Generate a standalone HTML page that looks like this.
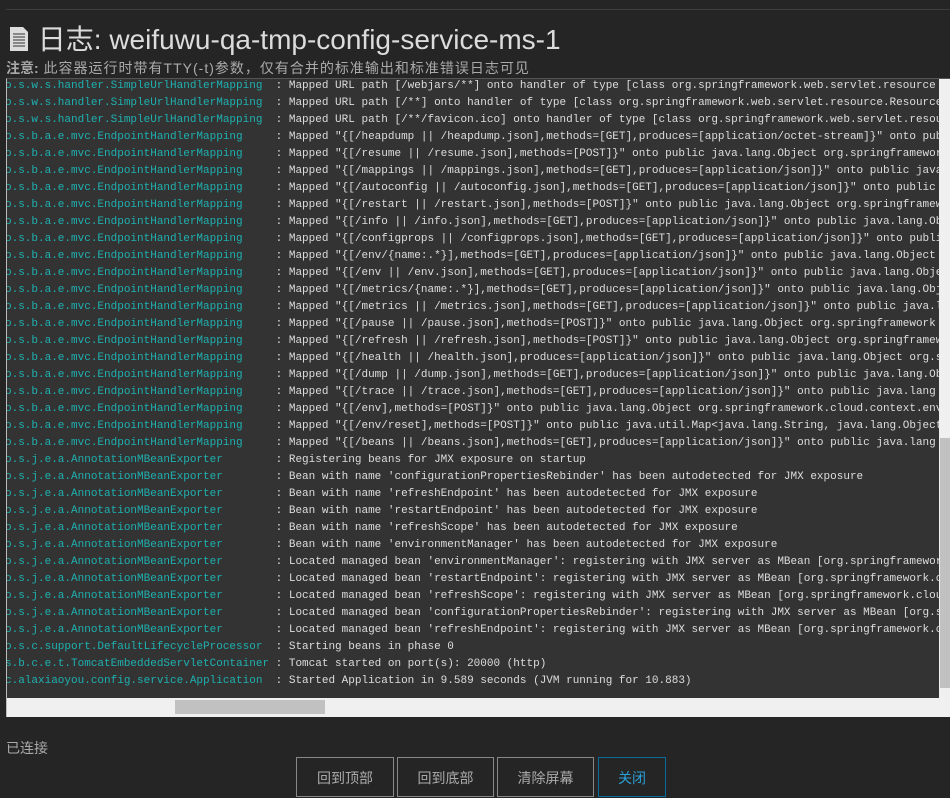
<!DOCTYPE html>
<html><head><meta charset="utf-8"><style>
body{margin:0;background:#252525;width:950px;height:794px;overflow:hidden;position:relative;font-family:"Liberation Sans","Noto Sans CJK SC",sans-serif}
.hr{position:absolute;left:6px;right:0;top:9px;height:1px;background:#3e3e3e}
h1{position:absolute;left:8px;top:22px;margin:0;font-weight:normal;font-size:28px;color:#dcdcdc;white-space:nowrap;line-height:36px}
.note{position:absolute;left:6px;top:58px;font-size:14px;letter-spacing:1px;color:#aaa;white-space:nowrap}
.note b{font-weight:bold;letter-spacing:0}
.box{position:absolute;left:6px;top:78px;width:944px;height:638px;background:#333;border-left:1px solid #bbb;border-top:1px solid #555;overflow:hidden}
pre{position:absolute;left:-2px;top:-1px;margin:0;font-family:"Liberation Mono",monospace;font-size:11px;line-height:17px;color:#ddd;white-space:pre}
pre i{font-style:normal;color:#1fb0b0}
.vs{position:absolute;right:0;top:0;width:12px;height:620px;background:#f0f0f0}
.vt{position:absolute;right:1px;top:359px;width:10px;height:250px;background:#c1c1c1}
.hs{position:absolute;left:0;bottom:0;width:944px;height:19px;background:#f0f0f0}
.ht{position:absolute;left:168px;top:2px;width:150px;height:14px;background:#c1c1c1}
.st{position:absolute;left:6px;top:738px;font-size:14px;color:#aaa}
.btn{position:absolute;top:757px;height:40px;border:1px solid #888;box-sizing:border-box;color:#aaa;font-size:14px;text-align:center;line-height:40px;background:#252525}
</style></head><body>
<div class="hr"></div>
<h1><svg width="22" height="26" viewBox="0 0 22 26" style="vertical-align:-3px"><path d="M2 1h13l5 5v19H2z" fill="#ddd"/><path d="M5 8h12M5 11h12M5 14h12M5 17h12M5 20h12" stroke="#555" stroke-width="1.3"/></svg> 日志: weifuwu-qa-tmp-config-service-ms-1</h1>
<div class="note"><b>注意:</b> 此容器运行时带有TTY(-t)参数，仅有合并的标准输出和标准错误日志可见</div>
<div class="box">
<pre><i>o.s.w.s.handler.SimpleUrlHandlerMapping </i> : Mapped URL path [/webjars/**] onto handler of type [class org.springframework.web.servlet.resource
<i>o.s.w.s.handler.SimpleUrlHandlerMapping </i> : Mapped URL path [/**] onto handler of type [class org.springframework.web.servlet.resource.ResourceHttp
<i>o.s.w.s.handler.SimpleUrlHandlerMapping </i> : Mapped URL path [/**/favicon.ico] onto handler of type [class org.springframework.web.servlet.resource
<i>o.s.b.a.e.mvc.EndpointHandlerMapping    </i> : Mapped "{[/heapdump || /heapdump.json],methods=[GET],produces=[application/octet-stream]}" onto public
<i>o.s.b.a.e.mvc.EndpointHandlerMapping    </i> : Mapped "{[/resume || /resume.json],methods=[POST]}" onto public java.lang.Object org.springframework
<i>o.s.b.a.e.mvc.EndpointHandlerMapping    </i> : Mapped "{[/mappings || /mappings.json],methods=[GET],produces=[application/json]}" onto public java
<i>o.s.b.a.e.mvc.EndpointHandlerMapping    </i> : Mapped "{[/autoconfig || /autoconfig.json],methods=[GET],produces=[application/json]}" onto public
<i>o.s.b.a.e.mvc.EndpointHandlerMapping    </i> : Mapped "{[/restart || /restart.json],methods=[POST]}" onto public java.lang.Object org.springframework
<i>o.s.b.a.e.mvc.EndpointHandlerMapping    </i> : Mapped "{[/info || /info.json],methods=[GET],produces=[application/json]}" onto public java.lang.Object
<i>o.s.b.a.e.mvc.EndpointHandlerMapping    </i> : Mapped "{[/configprops || /configprops.json],methods=[GET],produces=[application/json]}" onto public
<i>o.s.b.a.e.mvc.EndpointHandlerMapping    </i> : Mapped "{[/env/{name:.*}],methods=[GET],produces=[application/json]}" onto public java.lang.Object
<i>o.s.b.a.e.mvc.EndpointHandlerMapping    </i> : Mapped "{[/env || /env.json],methods=[GET],produces=[application/json]}" onto public java.lang.Object
<i>o.s.b.a.e.mvc.EndpointHandlerMapping    </i> : Mapped "{[/metrics/{name:.*}],methods=[GET],produces=[application/json]}" onto public java.lang.Object
<i>o.s.b.a.e.mvc.EndpointHandlerMapping    </i> : Mapped "{[/metrics || /metrics.json],methods=[GET],produces=[application/json]}" onto public java.lang
<i>o.s.b.a.e.mvc.EndpointHandlerMapping    </i> : Mapped "{[/pause || /pause.json],methods=[POST]}" onto public java.lang.Object org.springframework
<i>o.s.b.a.e.mvc.EndpointHandlerMapping    </i> : Mapped "{[/refresh || /refresh.json],methods=[POST]}" onto public java.lang.Object org.springframework
<i>o.s.b.a.e.mvc.EndpointHandlerMapping    </i> : Mapped "{[/health || /health.json],produces=[application/json]}" onto public java.lang.Object org.spring
<i>o.s.b.a.e.mvc.EndpointHandlerMapping    </i> : Mapped "{[/dump || /dump.json],methods=[GET],produces=[application/json]}" onto public java.lang.Object
<i>o.s.b.a.e.mvc.EndpointHandlerMapping    </i> : Mapped "{[/trace || /trace.json],methods=[GET],produces=[application/json]}" onto public java.lang
<i>o.s.b.a.e.mvc.EndpointHandlerMapping    </i> : Mapped "{[/env],methods=[POST]}" onto public java.lang.Object org.springframework.cloud.context.env
<i>o.s.b.a.e.mvc.EndpointHandlerMapping    </i> : Mapped "{[/env/reset],methods=[POST]}" onto public java.util.Map&lt;java.lang.String, java.lang.Object
<i>o.s.b.a.e.mvc.EndpointHandlerMapping    </i> : Mapped "{[/beans || /beans.json],methods=[GET],produces=[application/json]}" onto public java.lang
<i>o.s.j.e.a.AnnotationMBeanExporter       </i> : Registering beans for JMX exposure on startup
<i>o.s.j.e.a.AnnotationMBeanExporter       </i> : Bean with name 'configurationPropertiesRebinder' has been autodetected for JMX exposure
<i>o.s.j.e.a.AnnotationMBeanExporter       </i> : Bean with name 'refreshEndpoint' has been autodetected for JMX exposure
<i>o.s.j.e.a.AnnotationMBeanExporter       </i> : Bean with name 'restartEndpoint' has been autodetected for JMX exposure
<i>o.s.j.e.a.AnnotationMBeanExporter       </i> : Bean with name 'refreshScope' has been autodetected for JMX exposure
<i>o.s.j.e.a.AnnotationMBeanExporter       </i> : Bean with name 'environmentManager' has been autodetected for JMX exposure
<i>o.s.j.e.a.AnnotationMBeanExporter       </i> : Located managed bean 'environmentManager': registering with JMX server as MBean [org.springframework
<i>o.s.j.e.a.AnnotationMBeanExporter       </i> : Located managed bean 'restartEndpoint': registering with JMX server as MBean [org.springframework.c
<i>o.s.j.e.a.AnnotationMBeanExporter       </i> : Located managed bean 'refreshScope': registering with JMX server as MBean [org.springframework.cloud
<i>o.s.j.e.a.AnnotationMBeanExporter       </i> : Located managed bean 'configurationPropertiesRebinder': registering with JMX server as MBean [org.s
<i>o.s.j.e.a.AnnotationMBeanExporter       </i> : Located managed bean 'refreshEndpoint': registering with JMX server as MBean [org.springframework.c
<i>o.s.c.support.DefaultLifecycleProcessor </i> : Starting beans in phase 0
<i>s.b.c.e.t.TomcatEmbeddedServletContainer</i> : Tomcat started on port(s): 20000 (http)
<i>c.alaxiaoyou.config.service.Application </i> : Started Application in 9.589 seconds (JVM running for 10.883)</pre>
<div class="vs"><div class="vt"></div></div>
<div class="hs"><div class="ht"></div></div>
</div>
<div class="st">已连接</div>
<div class="btn" style="left:296px;width:98px">回到顶部</div>
<div class="btn" style="left:397px;width:97px">回到底部</div>
<div class="btn" style="left:497px;width:97px">清除屏幕</div>
<div class="btn" style="left:598px;width:68px;border-color:#0b6b9b;color:#2a9fd6">关闭</div>
</body></html>
